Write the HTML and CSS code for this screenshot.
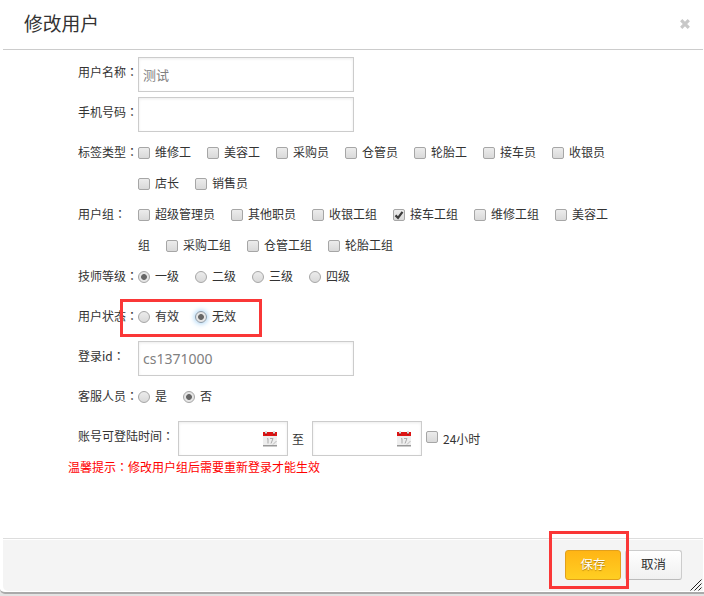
FILE: index.html
```html
<!DOCTYPE html>
<html lang="zh-CN">
<head>
<meta charset="utf-8">
<title>修改用户</title>
<link rel="stylesheet" href="styles.css">
</head>
<body>
<div class="dialog">
  <header class="head">
    <h1>修改用户</h1>
    <svg class="close" width="10" height="10" viewBox="0 0 10 10"><path d="M1.200 1.200 8.800 8.800M8.800 1.200 1.200 8.800" stroke="#c8c8c8" stroke-width="3.200"/></svg>
  </header>
  <main class="form">
    <div class="row"><div class="name">用户名称<span class="colon" lang="zh-TW">：</span></div><div class="field"><div class="input cjk">测试</div></div></div>
    <div class="row"><div class="name">手机号码<span class="colon" lang="zh-TW">：</span></div><div class="field"><div class="input"></div></div></div>
    <div class="row double"><div class="name">标签类型<span class="colon" lang="zh-TW">：</span></div><div class="field options"><label><i class="box"></i>维修工</label><label><i class="box"></i>美容工</label><label><i class="box"></i>采购员</label><label><i class="box"></i>仓管员</label><label><i class="box"></i>轮胎工</label><label><i class="box"></i>接车员</label><label><i class="box"></i>收银员</label><br><label><i class="box"></i>店长</label><label><i class="box"></i>销售员</label></div></div>
    <div class="row double"><div class="name">用户组<span class="colon" lang="zh-TW">：</span></div><div class="field options"><label><i class="box"></i>超级管理员</label><label><i class="box"></i>其他职员</label><label><i class="box"></i>收银工组</label><label><i class="box"><svg width="10" height="10" viewBox="0 0 10 10"><path d="M1.5 5.4 4 7.8 8.5 1.8" fill="none" stroke="#3c3c3c" stroke-width="2.2"/></svg></i>接车工组</label><label><i class="box"></i>维修工组</label><label><i class="box"></i>美容工<br>组</label><label><i class="box"></i>采购工组</label><label><i class="box"></i>仓管工组</label><label><i class="box"></i>轮胎工组</label></div></div>
    <div class="row"><div class="name">技师等级<span class="colon" lang="zh-TW">：</span></div><div class="field options"><label><i class="box radio on"></i>一级</label><label><i class="box radio"></i>二级</label><label><i class="box radio"></i>三级</label><label><i class="box radio"></i>四级</label></div></div>
    <div class="row"><div class="name">用户状态<span class="colon" lang="zh-TW">：</span></div><div class="field options"><label><i class="box radio"></i>有效</label><label><i class="box radio on focus"></i>无效</label></div></div>
    <div class="row"><div class="name">登录id<span class="colon" lang="zh-TW">：</span></div><div class="field"><div class="input">cs1371000</div></div></div>
    <div class="row"><div class="name">客服人员<span class="colon" lang="zh-TW">：</span></div><div class="field options"><label><i class="box radio"></i>是</label><label><i class="box radio on"></i>否</label></div></div>
    <div class="row time">
      <div class="name wide">账号可登陆时间<span class="colon" lang="zh-TW">：</span></div>
      <div class="input date"><svg width="16" height="17" viewBox="0 0 16 17"><path d="M1 5h14v10H1z" fill="#eee"/><path d="M1 2h14v4H1z" fill="#dc1414"/><path d="M1 15h14v1.5H1z" fill="#999"/><path d="M3 1h2v3H3zM11 1h2v3h-2z" fill="#ddd"/><path d="M3 3.500h2v1H3zM11 3.500h2v1h-2z" fill="#811"/><path d="M5 9l1-.5v5M8 8.500h3l-2 5" fill="none" stroke="#aaa"/><path d="M11 14.500l3.500-3.500" stroke="#bbb"/></svg></div>
      <span class="to">至</span>
      <div class="input date"><svg width="16" height="17" viewBox="0 0 16 17"><path d="M1 5h14v10H1z" fill="#eee"/><path d="M1 2h14v4H1z" fill="#dc1414"/><path d="M1 15h14v1.5H1z" fill="#999"/><path d="M3 1h2v3H3zM11 1h2v3h-2z" fill="#ddd"/><path d="M3 3.500h2v1H3zM11 3.500h2v1h-2z" fill="#811"/><path d="M5 9l1-.5v5M8 8.500h3l-2 5" fill="none" stroke="#aaa"/><path d="M11 14.500l3.500-3.500" stroke="#bbb"/></svg></div>
      <i class="box allday"></i><span class="hours">24小时</span>
    </div>
    <p class="hint">温馨提示<span class="colon" lang="zh-TW">：</span>修改用户组后需要重新登录才能生效</p>
  </main>
  <footer class="foot">
    <div class="btn save">保存</div>
    <div class="btn">取消</div>
    <svg class="grip" width="12" height="12" viewBox="0 0 12 12"><path d="M.5 11.500l11-11M4.500 11.500l7-7M8.500 11.500l3-3" stroke="#222"/></svg>
  </footer>
</div>
<div class="mark mark-status"></div>
<div class="mark mark-save"></div>
</body>
</html>
```
FILE: styles.css
```css
* { box-sizing: border-box; }
body {
  margin: 0;
  height: 596px;
  overflow: hidden;
  position: relative;
  background: #e3e3e3;
  font: 12px/30px "Noto Sans CJK SC", sans-serif;
  color: #333;
}
.dialog {
  height: 594px;
  padding: 0 1px 1px 3px;
  display: flex;
  flex-direction: column;
  background: #fff;
  border-bottom: 2px solid #aaa;
  border-radius: 0 0 0 5px;
}
.head {
  height: 50px;
  padding: 0 13px 0 21px;
  display: flex;
  justify-content: space-between;
  border-bottom: 1px solid #ccc;
}
h1 { margin: 0; font-size: 18.8px; line-height: 46px; font-weight: 400; }
.close { margin-top: 19px; }
.form { flex: 1; padding: 7px 0 0 75px; }
.row { display: flex; height: 40px; }
.row.double { height: 62px; }
.row.time { height: 35px; }
.name { width: 60px; flex: none; line-height: 29px; white-space: nowrap; }
.name.wide { width: 100px; }
.colon { font-family: "Noto Sans CJK TC", sans-serif; }
.field { width: 484px; line-height: 31px; }
.options { margin-top: -1px; }
label { margin-right: 16px; }
.box {
  display: inline-block;
  width: 12px;
  height: 12px;
  margin-right: 5px;
  vertical-align: -2px;
  border: 1px solid #a6a6a6;
  border-radius: 2px;
  background: linear-gradient(#ececec, #d9d9d9);
  line-height: 0;
}
.box svg { display: block; }
.radio { border-radius: 50%; }
.radio.on { background: radial-gradient(circle, #666 2.5px, #e5e5e5 3.3px); }
.radio.focus { border-color: #8899a8; box-shadow: 0 0 5px 1px #a9d4f5; }
.input {
  width: 216px;
  height: 35px;
  padding: 0 4px;
  border: 1px solid #ccc;
  box-shadow: inset 0 1px 3px rgba(0, 0, 0, .08);
  font: 14px/33px "Noto Sans", sans-serif;
  color: #808080;
}
.input.cjk { font: 13px/33px "Noto Sans CJK SC", sans-serif; }
.date {
  width: 110px;
  padding: 0 9px;
  display: flex;
  align-items: center;
  justify-content: flex-end;
}
.to { width: 24px; padding-left: 4px; line-height: 35px; }
.allday { margin: 10px 5px 0 4px; }
.hours { line-height: 35px; }
.hint { margin: -4px 0 0 -10px; color: #f00; }
.foot {
  position: relative;
  height: 53px;
  padding: 11px 21px 0 0;
  display: flex;
  gap: 4px;
  justify-content: flex-end;
  border-top: 1px solid #ddd;
  background: #f4f4f4;
  box-shadow: inset 0 1px #fff;
  border-radius: 0 0 0 5px;
}
.btn {
  width: 57px;
  height: 30px;
  border: 1px solid #ccc;
  border-bottom-color: #bbb;
  border-radius: 3px;
  background: linear-gradient(#fff, #f0f0f0);
  font-size: 12.5px;
  line-height: 26px;
  text-align: center;
}
.save {
  width: 56px;
  border-color: #e2a01c;
  background: linear-gradient(#ffb515, #ffcf22);
  color: #fff;
  text-shadow: 0 1px 1px rgba(120, 80, 0, .6);
}
.grip { position: absolute; right: 1px; bottom: 0; }
.mark { position: absolute; border: 3px solid #fa3737; }
.mark-status { left: 120px; top: 299px; width: 142px; height: 38px; }
.mark-save { left: 549px; top: 531px; width: 80px; height: 58px; }
```
